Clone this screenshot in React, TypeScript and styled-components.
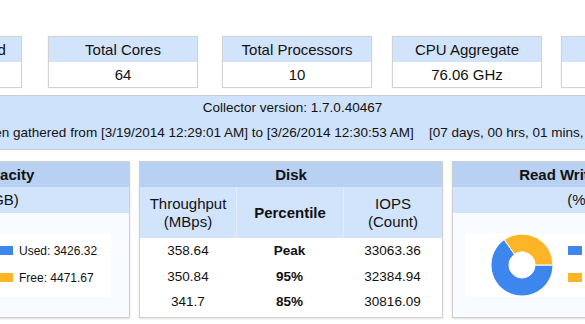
import React from 'react';
import styled, { createGlobalStyle } from 'styled-components';

const GlobalStyle = createGlobalStyle`
  html, body {
    margin: 0;
    padding: 0;
    background: #fff;
  }
  body {
    width: 585px;
    height: 324px;
    overflow: hidden;
    font-family: "Liberation Sans", Arial, Helvetica, sans-serif;
    color: #111;
  }
`;

const BLUE = '#3d86ee';
const ORANGE = '#fdb426';

const stats = [
    { title: 'Hosts Discovered', value: '8', offset: 0 },
    { title: 'Total Cores', value: '64', offset: 26 },
    { title: 'Total Processors', value: '10', offset: 24 },
    { title: 'CPU Aggregate', value: '76.06 GHz', offset: 20 },
    { title: 'Total Memory', value: '512 GB', offset: 19 },
];

const diskRows = [
    { mbps: '358.64', pct: 'Peak', iops: '33063.36' },
    { mbps: '350.84', pct: '95%', iops: '32384.94' },
    { mbps: '341.7', pct: '85%', iops: '30816.09' },
];

type Slice = { label: string; value: number; color: string };

const pt = (cx: number, cy: number, r: number, deg: number) => {
    const a = (deg * Math.PI) / 180;
    return `${(cx + r * Math.sin(a)).toFixed(2)} ${(cy - r * Math.cos(a)).toFixed(2)}`;
};

const slicePath = (start: number, end: number) => {
    const cx = 57, cy = 32, R = 31, r = 13;
    const large = end - start > 180 ? 1 : 0;
    return `M${pt(cx, cy, R, start)} A${R} ${R} 0 ${large} 1 ${pt(cx, cy, R, end)} L${pt(cx, cy, r, end)} A${r} ${r} 0 ${large} 0 ${pt(cx, cy, r, start)} Z`;
};

const Donut = ({ slices, inset }: { slices: Slice[]; inset: number }) => {
    const total = slices.reduce((s, x) => s + x.value, 0);
    let angle = 90;
    return (
        <ChartArea $inset={inset}>
            <svg width="103" height="64" viewBox="0 0 103 64">
                {slices.map(s => {
                    const start = angle;
                    angle += (s.value / total) * 360;
                    return <path key={s.label} d={slicePath(start, angle)} fill={s.color} stroke="#fff" strokeWidth="1" />;
                })}
            </svg>
            <Legend>
                {slices.map(s => (
                    <LegendItem key={s.label}>
                        <Swatch $color={s.color} />
                        <span>{s.label}</span>
                    </LegendItem>
                ))}
            </Legend>
        </ChartArea>
    );
};

export default function App() {
    return (
        <Page>
            <GlobalStyle />
            <CardRow>
                {stats.map(s => (
                    <StatCard key={s.title} $offset={s.offset}>
                        <CardHead>{s.title}</CardHead>
                        <CardValue>{s.value}</CardValue>
                    </StatCard>
                ))}
            </CardRow>

            <Banner>
                <BannerLine>Collector version: 1.7.0.40467</BannerLine>
                <BannerLine $shift={-26}>
                    Data has been gathered from [3/19/2014 12:29:01 AM] to [3/26/2014 12:30:53 AM]
                    <Duration>[07 days, 00 hrs, 01 mins, 52 secs]</Duration>
                </BannerLine>
            </Banner>

            <PanelRow>
                <Panel $width={254}>
                    <PanelHead>Capacity</PanelHead>
                    <SubHead>(GB)</SubHead>
                    <Donut
                        inset={19}
                        slices={[
                            { label: 'Used: 3426.32', value: 3426.32, color: BLUE },
                            { label: 'Free: 4471.67', value: 4471.67, color: ORANGE },
                        ]}
                    />
                </Panel>

                <Panel $width={304} $plain>
                    <PanelHead>Disk</PanelHead>
                    <DiskGrid>
                        <HeadCell>Throughput<br />(MBps)</HeadCell>
                        <HeadCell $bold>Percentile</HeadCell>
                        <HeadCell>IOPS<br />(Count)</HeadCell>
                        {diskRows.map(r => (
                            <React.Fragment key={r.pct}>
                                <Cell>{r.mbps}</Cell>
                                <Cell $bold>{r.pct}</Cell>
                                <Cell>{r.iops}</Cell>
                            </React.Fragment>
                        ))}
                    </DiskGrid>
                </Panel>

                <Panel $width={254}>
                    <PanelHead>Read Write Ratio</PanelHead>
                    <SubHead>(%)</SubHead>
                    <Donut
                        inset={12}
                        slices={[
                            { label: 'Read: 65.3', value: 65.3, color: BLUE },
                            { label: 'Write: 34.7', value: 34.7, color: ORANGE },
                        ]}
                    />
                </Panel>
            </PanelRow>
        </Page>
    );
}

const Page = styled.div`
    width: 585px;
    padding-top: 36px;
`

const CardRow = styled.div`
    display: flex;
    margin-left: -128px;
`

const StatCard = styled.div<{ $offset: number }>`
    flex: 0 0 150px;
    min-width: 0;
    box-sizing: border-box;
    margin-left: ${p => p.$offset}px;
    border: 1px solid #d3d3d3;
    box-shadow: 0 0 1px rgba(0, 0, 0, 0.15);
    background: #fff;
`

const CardHead = styled.div`
    height: 25px;
    line-height: 25px;
    background: #d2e4fb;
    text-align: center;
    font-size: 15px;
    white-space: nowrap;
`

const CardValue = styled.div`
    height: 25px;
    line-height: 25px;
    text-align: center;
    font-size: 15px;
`

const Banner = styled.div`
    margin: 7px -200px 0;
    padding: 2px 0 6px;
    border: 1px solid #cbcbcb;
    background: #cfe2fb;
    text-align: center;
    font-size: 13.5px;
`

const BannerLine = styled.div<{ $shift?: number }>`
    line-height: 20px;
    white-space: nowrap;
    margin: ${p => (p.$shift ? `5px 0 0 ${p.$shift}px` : '0')};
`

const Duration = styled.span`
    margin-left: 15px;
`

const PanelRow = styled.div`
    display: flex;
    gap: 9px;
    margin: 11px 0 0 -124px;
`

const Panel = styled.div<{ $width: number; $plain?: boolean }>`
    flex: 0 0 ${p => p.$width}px;
    min-width: 0;
    overflow: hidden;
    box-sizing: border-box;
    height: 157px;
    display: flex;
    flex-direction: column;
    border: 1px solid #d0d0d0;
    box-shadow: 0 1px 2px rgba(0, 0, 0, 0.12);
    background: ${p => (p.$plain ? '#fff' : '#f8fbff')};
`

const PanelHead = styled.div`
    height: 25px;
    line-height: 25px;
    background: #b8d0f1;
    text-align: center;
    font-size: 15px;
    font-weight: bold;
    white-space: nowrap;
`

const SubHead = styled.div`
    height: 26px;
    line-height: 26px;
    background: #d1e4fc;
    text-align: center;
    font-size: 15px;
`

const ChartArea = styled.div<{ $inset: number }>`
    display: flex;
    align-items: flex-start;
    width: 215px;
    height: 64px;
    margin: 20px 0 0 ${p => p.$inset}px;
    background: #fff;
`

const Legend = styled.div`
    display: flex;
    flex-direction: column;
    gap: 18px;
    padding-top: 13px;
`

const LegendItem = styled.div`
    display: flex;
    align-items: center;
    height: 9px;
    font-size: 12px;
    white-space: nowrap;
`

const Swatch = styled.span<{ $color: string }>`
    width: 14px;
    height: 9px;
    margin-right: 6px;
    background: ${p => p.$color};
`

const DiskGrid = styled.div`
    display: grid;
    grid-template-columns: 96px 107px 1fr;
`

const HeadCell = styled.div<{ $bold?: boolean }>`
    height: 51px;
    display: flex;
    align-items: center;
    justify-content: center;
    text-align: center;
    background: #d1e4fc;
    font-size: 15px;
    line-height: 18px;
    font-weight: ${p => (p.$bold ? 'bold' : 'normal')};
    & + & {
        border-left: 1px solid #e3edfc;
    }
`

const Cell = styled.div<{ $bold?: boolean }>`
    height: 25.5px;
    line-height: 25.5px;
    text-align: center;
    font-size: 13.5px;
    font-weight: ${p => (p.$bold ? 'bold' : 'normal')};
`
